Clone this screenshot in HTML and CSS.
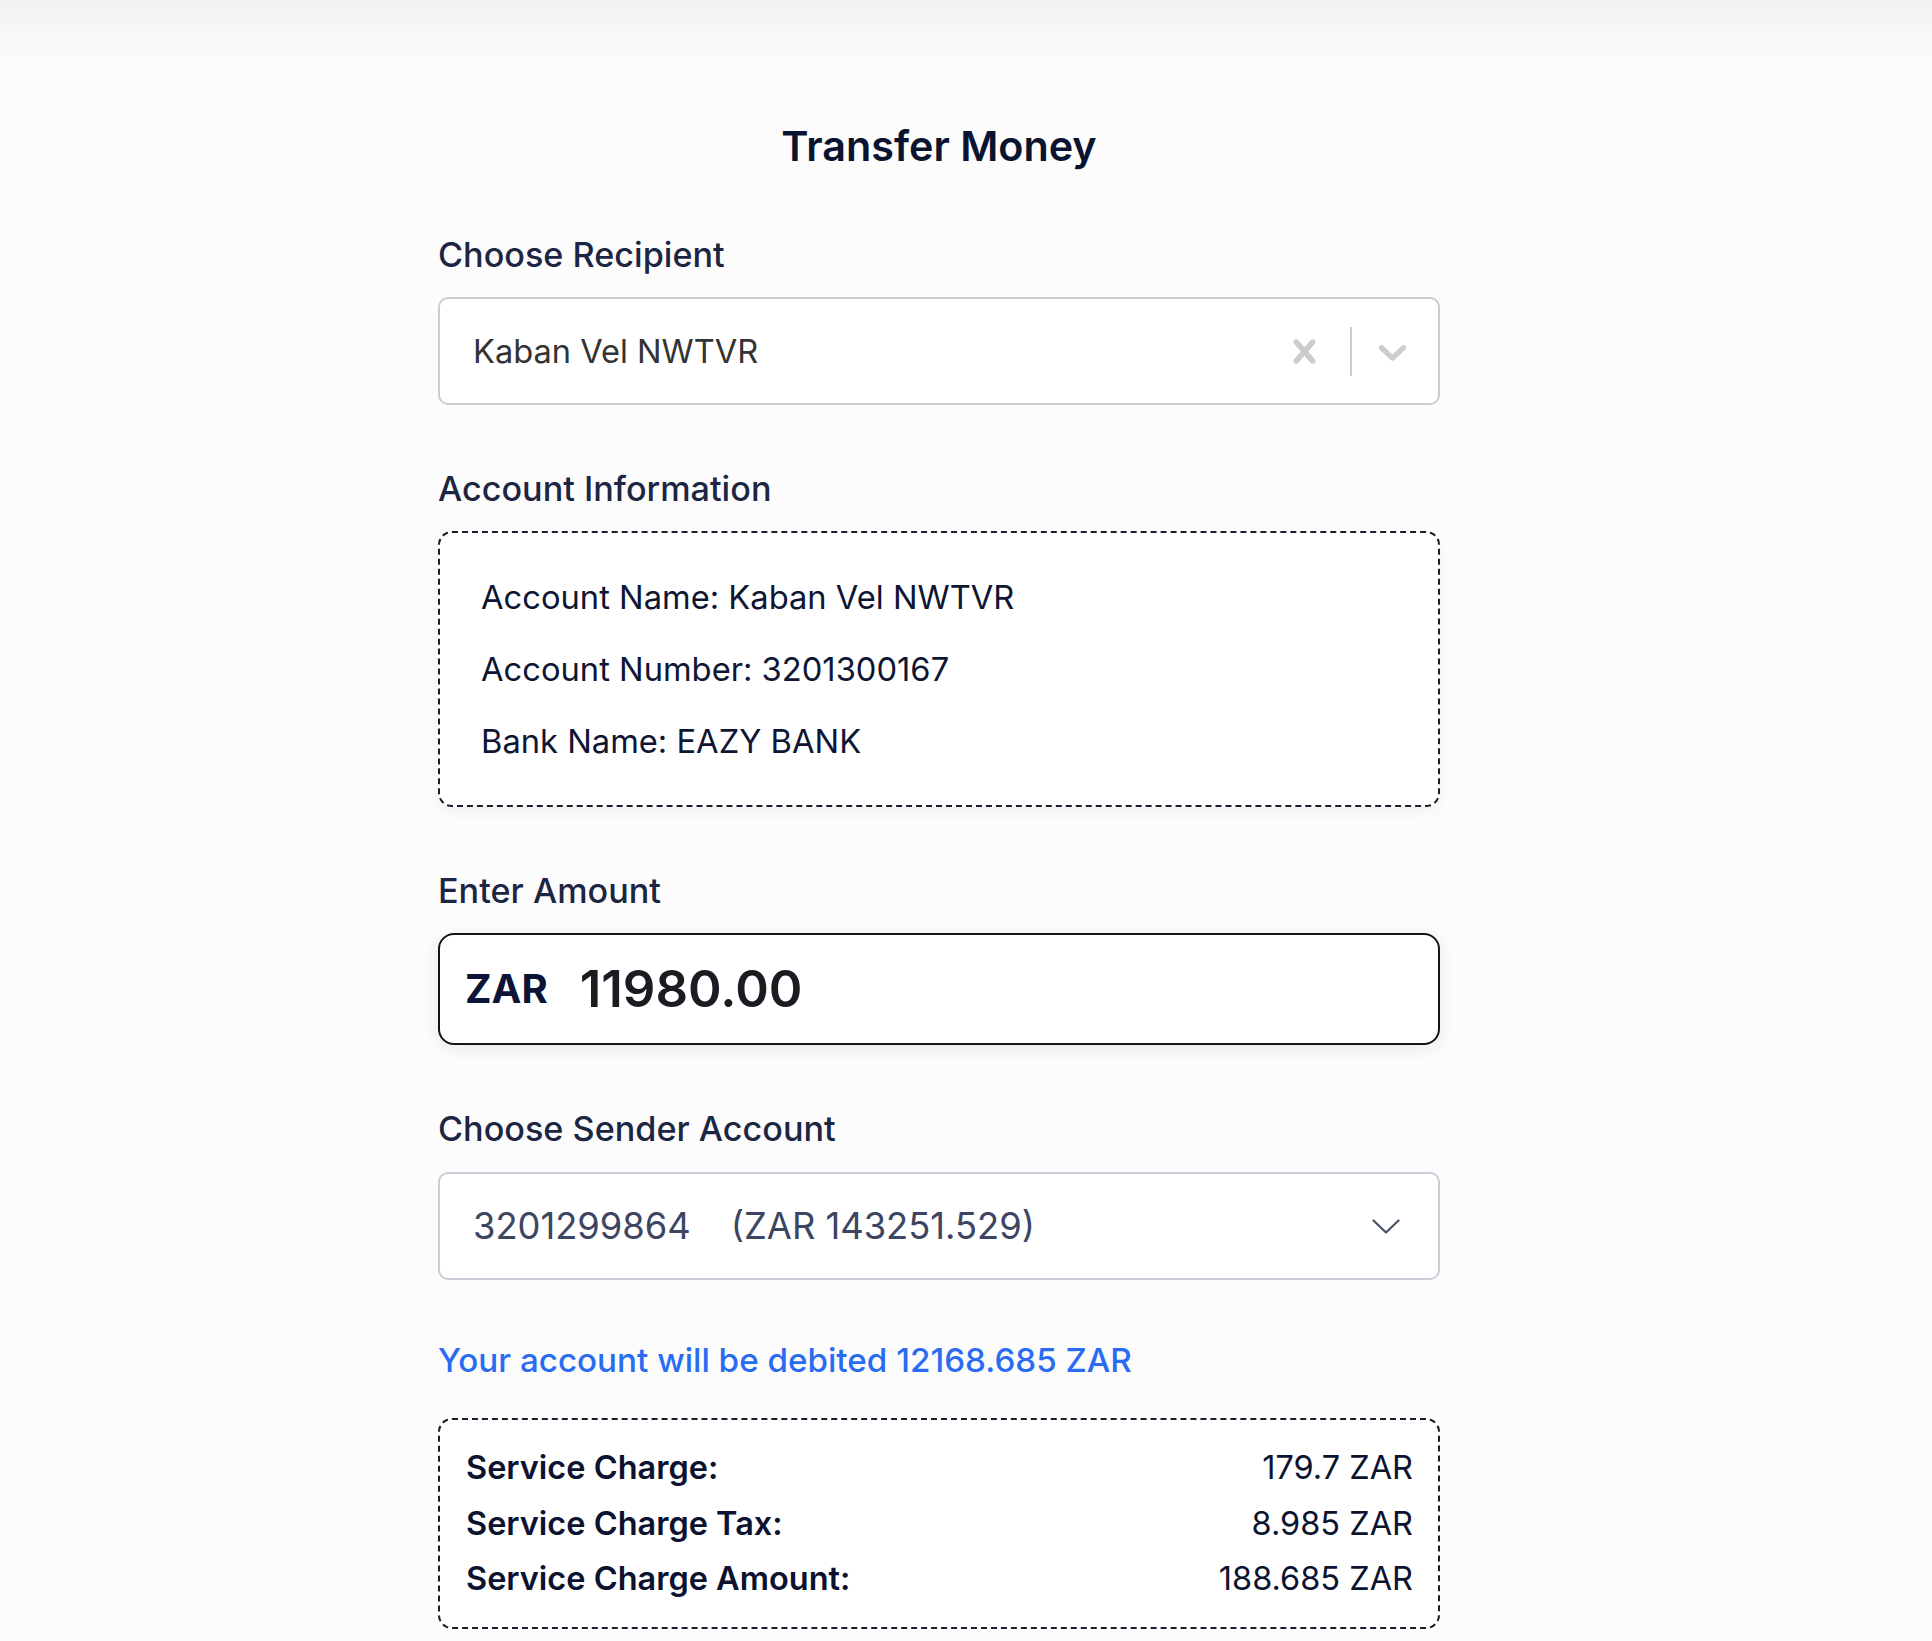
FILE: index.html
```html
<!DOCTYPE html>
<html lang="en">
<head>
<meta charset="utf-8">
<title>Transfer Money</title>
<link rel="stylesheet" href="styles.css">
</head>
<body>
<div class="page">
  <main class="panel">
    <h1 class="title">Transfer Money</h1>

    <section class="field">
      <div class="label">Choose Recipient</div>
      <div class="rselect">
        <div class="rselect-value">Kaban Vel NWTVR</div>
        <div class="rselect-indicators">
          <span class="ind ind-clear">
            <svg viewBox="0 0 20 20" width="47" height="47" aria-hidden="true"><path fill="#cccccc" d="M14.348 14.849c-0.469 0.469-1.229 0.469-1.697 0l-2.651-3.030-2.651 3.029c-0.469 0.469-1.229 0.469-1.697 0-0.469-0.469-0.469-1.229 0-1.697l2.758-3.150-2.759-3.152c-0.469-0.469-0.469-1.228 0-1.697s1.228-0.469 1.697 0l2.652 3.031 2.651-3.031c0.469-0.469 1.228-0.469 1.697 0s0.469 1.229 0 1.697l-2.758 3.152 2.758 3.150c0.469 0.469 0.469 1.229 0 1.698z"/></svg>
          </span>
          <span class="sep"></span>
          <span class="ind ind-drop">
            <svg viewBox="0 0 20 20" width="47" height="47" aria-hidden="true"><path fill="#cccccc" d="M4.516 7.548c0.436-0.446 1.043-0.481 1.576 0l3.908 3.747 3.908-3.747c0.533-0.481 1.141-0.446 1.574 0 0.436 0.445 0.408 1.197 0 1.615-0.406 0.418-4.695 4.502-4.695 4.502-0.217 0.223-0.502 0.335-0.787 0.335s-0.570-0.112-0.789-0.335c0 0-4.287-4.084-4.695-4.502s-0.436-1.170 0-1.615z"/></svg>
          </span>
        </div>
      </div>
    </section>

    <section class="field">
      <div class="label">Account Information</div>
      <div class="info-box">
        <p class="info-line">Account Name: Kaban Vel NWTVR</p>
        <p class="info-line">Account Number: 3201300167</p>
        <p class="info-line">Bank Name: EAZY BANK</p>
      </div>
    </section>

    <section class="field">
      <div class="label">Enter Amount</div>
      <div class="amount-box">
        <span class="currency">ZAR</span>
        <span class="amount">11980.00</span>
      </div>
    </section>

    <section class="field">
      <div class="label label-sender">Choose Sender Account</div>
      <div class="sselect">
        <span class="sselect-value">3201299864<span class="spacer"></span>(ZAR 143251.529)</span>
        <svg class="sselect-chevron" viewBox="0 0 28 15" width="28" height="15" aria-hidden="true"><polyline points="1.5,1.5 14,13.5 26.5,1.5" fill="none" stroke="#4a5369" stroke-width="2.2" stroke-linecap="round" stroke-linejoin="round"/></svg>
      </div>
    </section>

    <p class="debit">Your account will be debited 12168.685 ZAR</p>

    <div class="summary-box">
      <div class="summary-row"><span class="s-key">Service Charge:</span><span class="s-val">179.7 ZAR</span></div>
      <div class="summary-row"><span class="s-key">Service Charge Tax:</span><span class="s-val">8.985 ZAR</span></div>
      <div class="summary-row"><span class="s-key">Service Charge Amount:</span><span class="s-val">188.685 ZAR</span></div>
    </div>
  </main>
</div>
</body>
</html>
```

FILE: styles.css
```css
* {
  box-sizing: border-box;
}

html, body {
  margin: 0;
  padding: 0;
}

body {
  font-family: "Inter", "Noto Sans", "Liberation Sans", sans-serif;
  background: linear-gradient(#f1f1f1 0px, #f9f9f9 40px, #fcfcfc 80px) no-repeat, #fcfcfc;
  min-height: 1641px;
  color: #0e1633;
}

.page {
  display: flex;
  justify-content: center;
  padding: 121px 54px 0 0;
}

.panel {
  width: 1002px;
  display: flex;
  flex-direction: column;
}

.title {
  margin: 0;
  font-size: 41.3px;
  line-height: 50px;
  font-weight: 600;
  text-align: center;
  color: #0a1330;
}

.field {
  margin-top: 64px;
  display: flex;
  flex-direction: column;
}

.label {
  font-size: 34.2px;
  line-height: 40px;
  font-weight: 500;
  color: #1c2642;
  margin-bottom: 22px;
}

.label-sender {
  margin-bottom: 23px;
}

/* react-select style recipient */
.rselect {
  height: 108px;
  border: 2px solid #cccccc;
  border-radius: 10px;
  background: #ffffff;
  display: flex;
  align-items: center;
  padding-left: 33px;
}

.rselect-value {
  flex: 1;
  font-size: 32.6px;
  line-height: 40px;
  color: #333333;
}

.rselect-indicators {
  display: flex;
  align-items: center;
  height: 100%;
  padding-right: 22px;
}

.ind {
  display: flex;
  align-items: center;
  justify-content: center;
}

.ind svg {
  display: block;
}

.sep {
  width: 2px;
  height: 49px;
  background: #cccccc;
  margin: 0 17px 0 22px;
}

/* account info */
.info-box {
  border: 2px dashed #1b1d2c;
  border-radius: 14px;
  background: #ffffff;
  padding: 44px 20px 44px 41px;
  display: flex;
  flex-direction: column;
  gap: 32px;
  box-shadow: 0 6px 14px rgba(0, 0, 0, 0.04);
}

.info-line {
  margin: 0;
  font-size: 32.7px;
  line-height: 40px;
  color: #0e1633;
}

/* amount */
.amount-box {
  height: 112px;
  border: 2.5px solid #141518;
  border-radius: 16px;
  background: #ffffff;
  display: flex;
  align-items: center;
  padding-left: 25px;
  gap: 32px;
  box-shadow: 0 4px 18px rgba(0, 0, 0, 0.08);
}

.currency {
  font-size: 40px;
  line-height: 48px;
  font-weight: 700;
  color: #0b1437;
}

.amount {
  font-size: 51px;
  line-height: 60px;
  font-weight: 600;
  color: #1a1c22;
}

/* sender select */
.sselect {
  height: 108px;
  border: 2px solid #c8cdda;
  border-radius: 10px;
  background: #ffffff;
  display: flex;
  align-items: center;
  justify-content: space-between;
  padding: 0 38px 0 33px;
}

.sselect-value {
  font-size: 36.3px;
  line-height: 44px;
  color: #3c4562;
  display: flex;
  align-items: center;
}

.spacer {
  display: inline-block;
  width: 40px;
}

.sselect-chevron {
  display: block;
}

/* debit */
.debit {
  margin: 60px 0 0 0;
  font-size: 33.2px;
  line-height: 40px;
  font-weight: 500;
  color: #2a6cf1;
}

/* summary */
.summary-box {
  margin-top: 38px;
  border: 2px dashed #1b1d2c;
  border-radius: 14px;
  background: #ffffff;
  padding: 20px 25px 20px 26px;
  display: flex;
  flex-direction: column;
}

.summary-row {
  display: flex;
  justify-content: space-between;
  align-items: center;
  font-size: 32.5px;
  line-height: 55.5px;
  color: #0b1330;
}

.s-key {
  font-weight: 600;
}

.s-val {
  font-weight: 400;
}
```
